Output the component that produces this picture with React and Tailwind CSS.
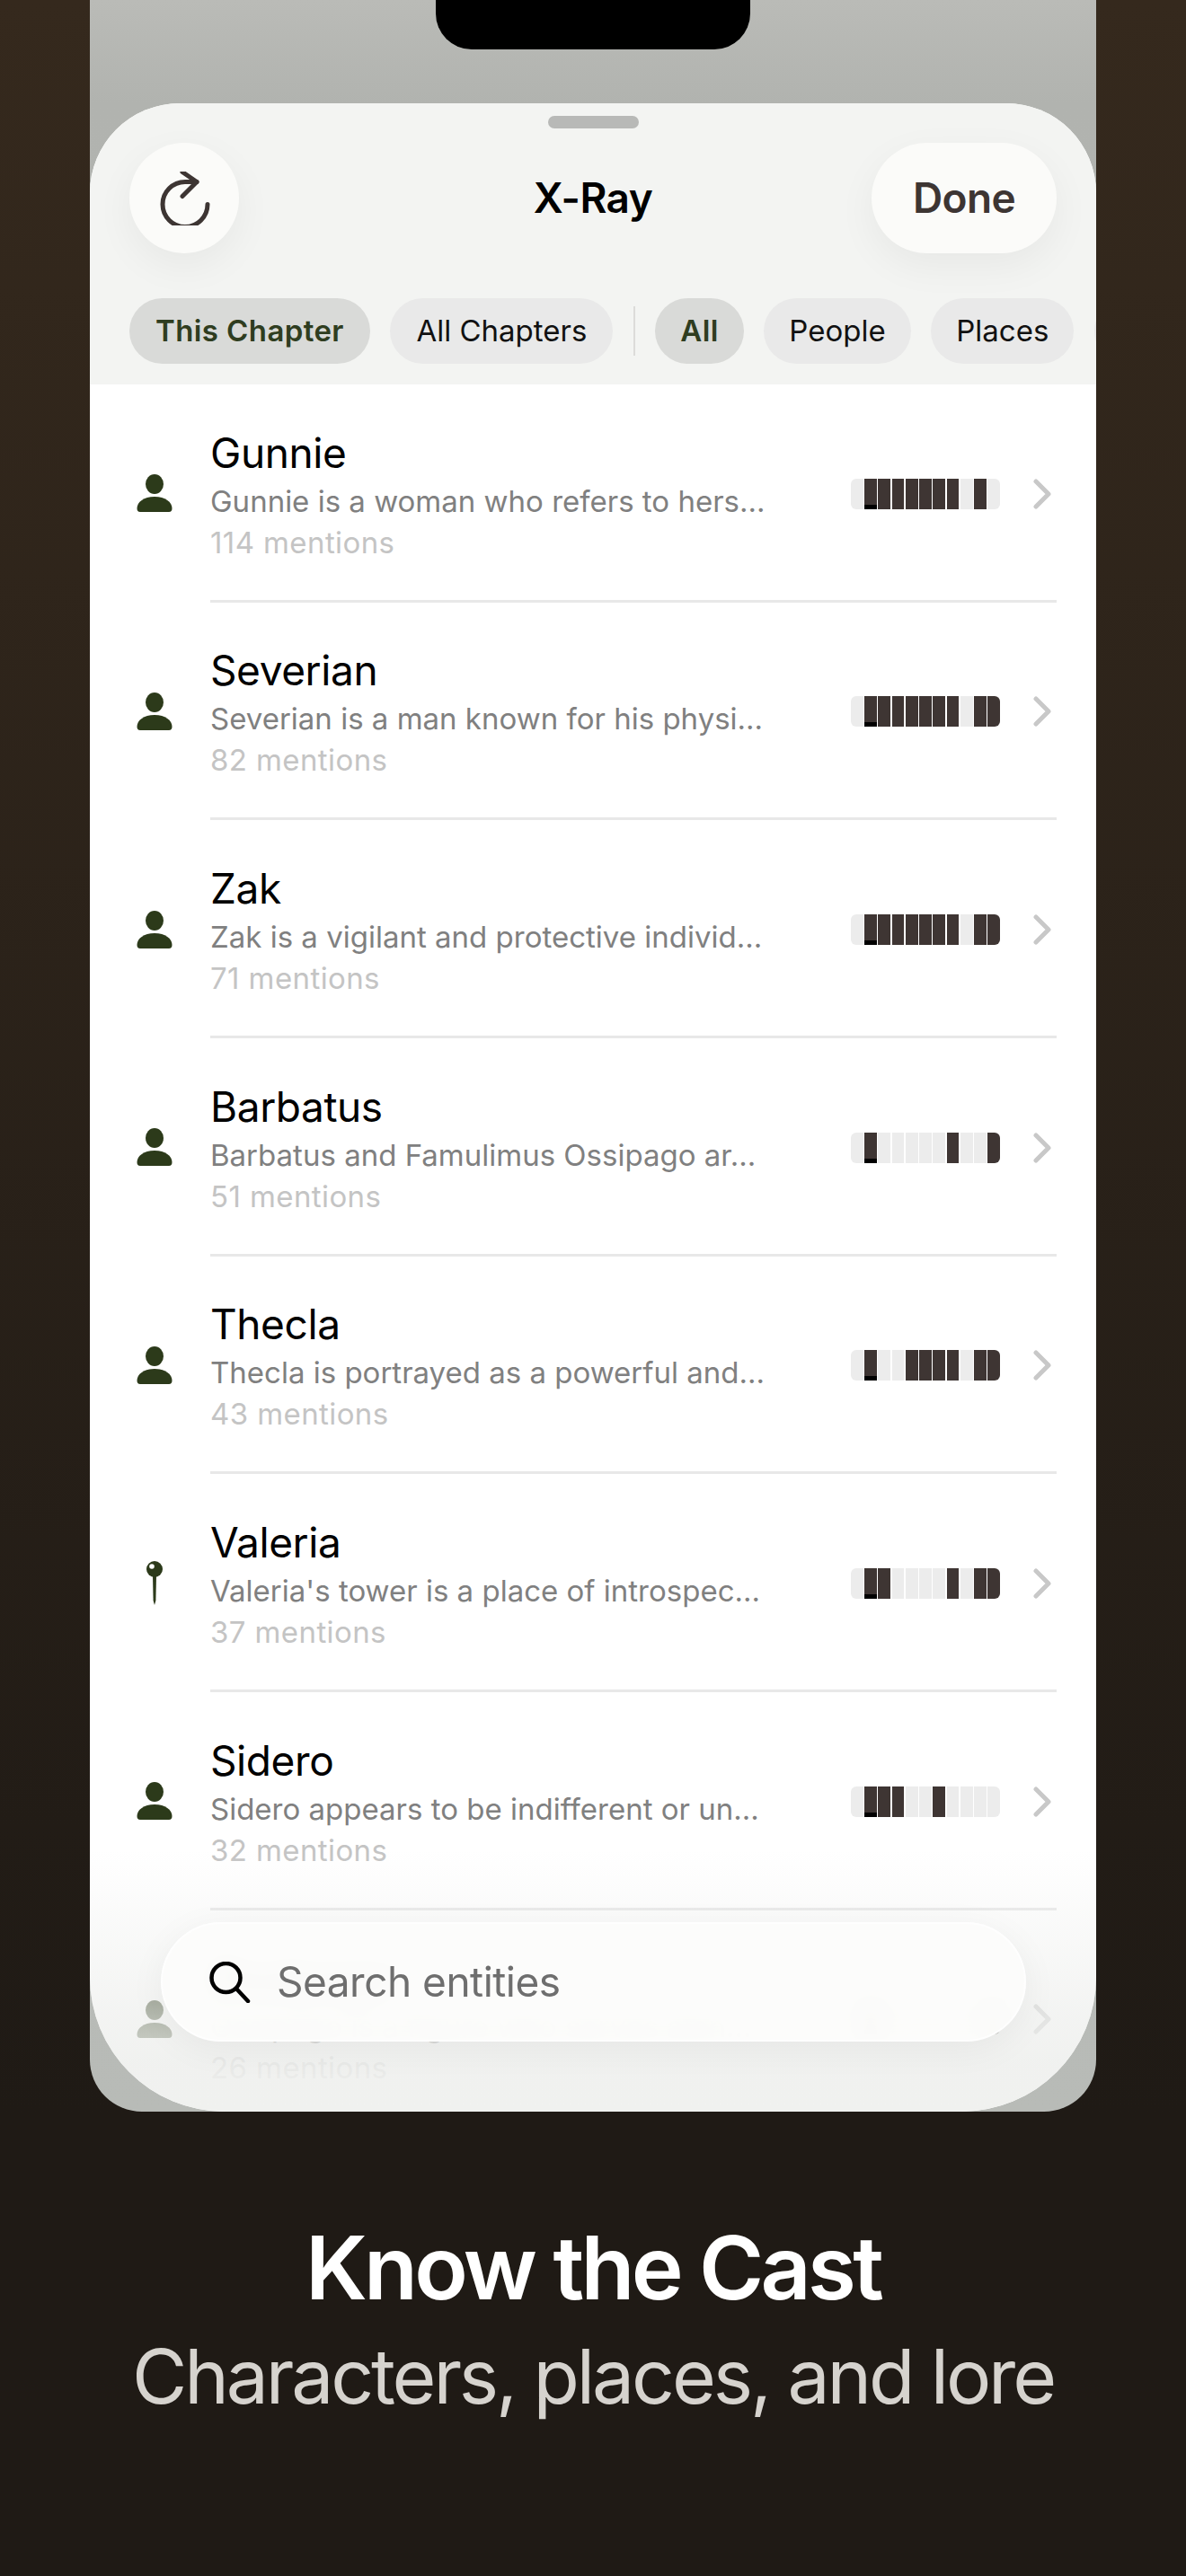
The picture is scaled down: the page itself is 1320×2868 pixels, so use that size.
const rows = [
  { name: "Gunnie", desc: "Gunnie is a woman who refers to hers…", count: 114, kind: "person", filled: [1, 2, 3, 4, 5, 6, 7, 9] },
  { name: "Severian", desc: "Severian is a man known for his physi…", count: 82, kind: "person", filled: [1, 2, 3, 4, 5, 6, 7, 9, 10] },
  { name: "Zak", desc: "Zak is a vigilant and protective individ…", count: 71, kind: "person", filled: [1, 2, 3, 4, 5, 6, 7, 9, 10] },
  { name: "Barbatus", desc: "Barbatus and Famulimus Ossipago ar…", count: 51, kind: "person", filled: [1, 7, 10] },
  { name: "Thecla", desc: "Thecla is portrayed as a powerful and…", count: 43, kind: "person", filled: [1, 4, 5, 6, 7, 9, 10] },
  { name: "Valeria", desc: "Valeria's tower is a place of introspec…", count: 37, kind: "place", filled: [1, 2, 7, 9, 10] },
  { name: "Sidero", desc: "Sidero appears to be indifferent or un…", count: 32, kind: "person", filled: [1, 2, 3, 6] },
  { name: "Ossipago", desc: "Ossipago is a figure who serves alon…", count: 26, kind: "person", filled: [1, 10] },
];

const PersonIcon = () => (
  <svg width="40" height="42" viewBox="0 0 40 42" fill="#2c3a1a">
    <ellipse cx="20" cy="11" rx="10" ry="11" />
    <path d="M.5 38C.5 31 8 25 20 25s19.5 6 19.5 13q0 4-3.500 4H4q-3.500 0-3.500-4Z" />
  </svg>
);

const PinIcon = () => (
  <svg width="18" height="49" viewBox="0 0 18 49">
    <circle cx="9" cy="9" r="9" fill="#2c3a1a" />
    <circle cx="6" cy="6" r="2.800" fill="#fff" />
    <path d="M7 16h4l-.6 28-1.400 5-1.400-5Z" fill="#2c3a1a" />
  </svg>
);

const Chevron = () => (
  <svg width="20" height="34" viewBox="0 0 20 34" fill="none" stroke="#c8c8c8" strokeWidth="5" strokeLinecap="round" strokeLinejoin="round">
    <path d="M3 3l14 14L3 31" />
  </svg>
);

function Mentions({ filled }) {
  const slots = [0, 1, 2, 3, 4, 5, 6, 7, 8, 9, 10];
  return (
    <div className="flex w-[166px] h-[34px] gap-[1.5px] rounded-[6px] overflow-hidden">
      {slots.map((i) => (
        <div key={i} className={`relative flex-1 ${filled.includes(i) ? "bg-[#3e3533]" : "bg-[#ececec]"}`}>
          {i === 1 && <div className="absolute left-0 right-0 bottom-0 h-[5px] bg-black" />}
        </div>
      ))}
    </div>
  );
}

function Row({ row }) {
  return (
    <div className="flex h-[242.67px] pl-[52px] pr-[44px] items-stretch shrink-0">
      <div className="w-[82px] flex items-center">
        <div className="w-[40px] flex justify-center">
          {row.kind === "person" ? <PersonIcon /> : <PinIcon />}
        </div>
      </div>
      <div className="flex-1 flex items-center pt-[4px] border-b-[3px] border-[#e8e8e8]">
        <div className="flex-1 pt-[6px]">
          <div className="text-[46px] leading-[50px] text-black tracking-[-0.4px]">{row.name}</div>
          <div className="mt-[6px] text-[33px] leading-[46px] text-[#808080] whitespace-nowrap">{row.desc}</div>
          <div className="text-[33px] leading-[46px] text-[#c4c4c4] tracking-[0.4px]">{row.count} mentions</div>
        </div>
        <Mentions filled={row.filled} />
        <div className="ml-[37px] mr-[6px] flex">
          <Chevron />
        </div>
      </div>
    </div>
  );
}

function Chip({ label, active, tight }) {
  return (
    <div
      className={`h-[73px] shrink-0 rounded-full flex items-center text-[33px] ${tight ? "px-[28px]" : "px-[29px]"} ${
        active ? "bg-[#d9dad8] text-[#2f3d20] font-semibold tracking-[0.4px]" : "bg-[#e9e9e9] text-[#111111]"
      }`}
    >
      {label}
    </div>
  );
}

export default function App() {
  return (
    <div className="w-[1320px] h-[2868px] overflow-hidden bg-[linear-gradient(to_bottom,#35291d,#1f1a15_82%)] font-['Inter',sans-serif]">
      <div className="ml-[100px] w-[1120px] h-[2351px] rounded-b-[58px] overflow-hidden bg-[linear-gradient(to_bottom,#babbb7,#b1b3af_115px,#b8bbb7)]">
        <div className="mx-auto w-[350px] h-[55px] rounded-b-[40px] bg-black" />
        <div className="relative mt-[60px] h-[2236px] rounded-t-[100px] rounded-b-[150px] overflow-hidden bg-white">
          {/* header */}
          <div className="h-[313px] bg-[#f3f4f2] flex flex-col">
            <div className="mx-auto mt-[14px] w-[101px] h-[14px] rounded-full bg-[#b8b9b7]" />
            <div className="mt-[16px] h-[123px] px-[44px] flex items-center justify-between relative">
              <div className="w-[122px] h-[123px] rounded-full bg-[#fbfbf9] flex items-center justify-center shadow-[0_14px_44px_rgba(0,0,0,0.05)]">
                <svg width="60" height="60" viewBox="0 5.500 60 60" fill="none" stroke="#3d3533" strokeWidth="5" strokeLinecap="round" strokeLinejoin="round">
                  <path d="M56 42A25 25 0 1 1 31 17H44" />
                  <path d="M28 6l16 11-16 16" />
                </svg>
              </div>
              <div className="absolute left-0 right-0 text-center text-[46px] font-semibold text-black tracking-[-0.6px]">X-Ray</div>
              <div className="relative w-[206px] h-[123px] rounded-full bg-[#fbfbf9] flex items-center justify-center text-[46px] font-semibold text-[#3d3533] tracking-[-0.6px] shadow-[0_14px_44px_rgba(0,0,0,0.05)]">
                Done
              </div>
            </div>
            <div className="mt-[50px] pl-[44px] flex items-center gap-[22.500px] overflow-hidden">
              <Chip label="This Chapter" active />
              <Chip label="All Chapters" />
              <div className="w-[2px] h-[55px] bg-[#dcdcda] shrink-0" />
              <Chip label="All" active tight />
              <Chip label="People" tight />
              <Chip label="Places" tight />
              <div className="h-[73px] w-[100px] shrink-0 rounded-full bg-[#e9e9e9]" />
            </div>
          </div>

          {/* list */}
          <div className="flex flex-col">
            {rows.map((r) => (
              <Row key={r.name} row={r} />
            ))}
          </div>

          {/* bottom fade */}
          <div className="absolute left-0 right-0 bottom-0 h-[291px] bg-[linear-gradient(to_bottom,rgba(238,239,237,0),rgba(238,239,237,0.27)_24%,rgba(238,239,237,0.72)_65%,rgba(238,239,237,0.87)_83%,rgba(240,241,239,1))]" />

          {/* search */}
          <div className="absolute left-[79px] right-[78px] bottom-[78px] h-[133px] rounded-full bg-[#fcfcfb]/95 backdrop-blur-md border-2 border-white/70 shadow-[0_8px_40px_rgba(0,0,0,0.05)] flex items-center pl-[52px] gap-[29px]">
            <svg width="46" height="46" viewBox="0 0 46 46" fill="none" stroke="#000" strokeWidth="4.500" strokeLinecap="round">
              <circle cx="18.500" cy="18" r="16" />
              <path d="M30 30l13 14" />
            </svg>
            <span className="text-[46px] text-[#6e6e6e] tracking-[-0.5px]">Search entities</span>
          </div>
        </div>
      </div>

      {/* caption */}
      <div className="mt-[119px] flex flex-col items-center">
        <div className="text-[98px] leading-[110px] font-semibold text-white tracking-[-3.700px]">Know the Cast</div>
        <div className="mt-[16px] text-[84px] leading-[100px] text-[#d6d3ce] tracking-[-3.150px]">Characters, places, and lore</div>
      </div>
    </div>
  );
}
